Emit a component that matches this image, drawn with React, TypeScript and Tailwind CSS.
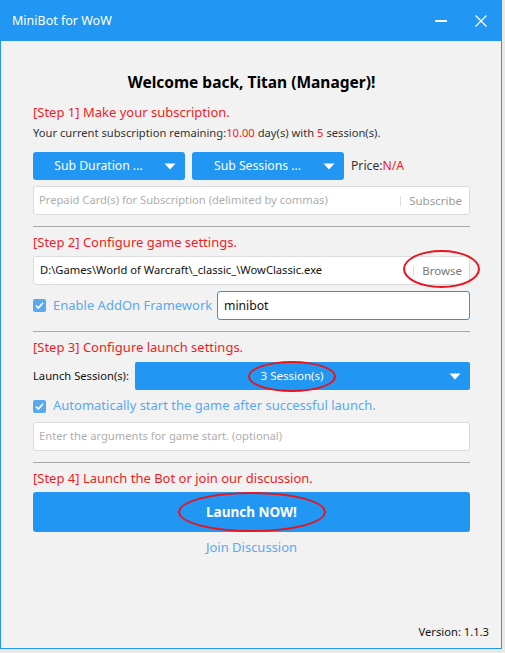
import { useState } from 'react';

function Caret() {
  return (
    <svg width="12" height="7" viewBox="0 0 12 7" className="shrink-0">
      <path d="M0.5 0.5 L11.5 0.5 L6 6.5 Z" fill="#ffffff" />
    </svg>
  );
}

function Check() {
  return (
    <div className="w-[13px] h-[13px] rounded-[2px] bg-[#5aa9ef] flex items-center justify-center shrink-0">
      <svg width="11" height="11" viewBox="0 0 11 11">
        <path d="M2 5.6 L4.4 8 L9 2.8" fill="none" stroke="#ffffff" strokeWidth="1.6" />
      </svg>
    </div>
  );
}

function Ring({ className }: { className: string }) {
  return (
    <div
      className={
        'absolute rounded-[50%] border-[2.5px] border-[#e8141e] pointer-events-none ' + className
      }
    />
  );
}

function StepTitle({ children, className = '' }: { children: string; className?: string }) {
  return (
    <div className={'h-[20px] leading-[20px] text-[13px] text-[#f01c24] whitespace-nowrap ' + className}>
      {children}
    </div>
  );
}

export default function App() {
  const [addonName, setAddonName] = useState('minibot');
  const [cards, setCards] = useState('');
  const [args, setArgs] = useState('');

  return (
    <div
      className="w-[505px] h-[653px] bg-[#e9e9e9] relative"
      style={{ fontFamily: '"Noto Sans", "Open Sans", sans-serif' }}
    >
      <div className="w-[502px] h-[649px] bg-[#f2f2f2] border border-[#2196f3] flex flex-col">
        {/* title bar */}
        <div className="h-[40px] bg-[#2196f3] flex items-center pl-[11px] pr-[14px] text-white shrink-0">
          <span className="text-[12.5px] flex-1">MiniBot for WoW</span>
          <div className="w-[12px] h-[2px] bg-white mr-[28px]" />
          <svg width="12" height="12" viewBox="0 0 12 12">
            <path d="M0.5 0.5 L11.5 11.5 M11.5 0.5 L0.5 11.5" stroke="#ffffff" strokeWidth="1.3" />
          </svg>
        </div>

        <div className="flex-1 flex flex-col pl-[32px] pr-[31px] text-[11.2px] text-[#333333]">
          <h1 className="mt-[30px] h-[22px] leading-[22px] text-center text-[15.5px] font-bold text-black">
            Welcome back, Titan (Manager)!
          </h1>

          {/* step 1 */}
          <StepTitle className="mt-[9px]">[Step 1] Make your subscription.</StepTitle>
          <div className="mt-[3px] h-[16px] leading-[16px] whitespace-nowrap">
            Your current subscription remaining:<span className="text-[#f01c24]">10.00</span> day(s) with{' '}
            <span className="text-[#f01c24]">5</span> session(s).
          </div>
          <div className="mt-[11px] flex items-center gap-[7px] h-[28px]">
            <button className="w-[152px] h-full bg-[#2196f3] rounded-[3px] flex items-center text-white text-[12.2px] pr-[9px]">
              <span className="flex-1 text-center whitespace-nowrap">Sub Duration ...</span>
              <Caret />
            </button>
            <button className="w-[152px] h-full bg-[#2196f3] rounded-[3px] flex items-center text-white text-[12.2px] pr-[9px]">
              <span className="flex-1 text-center whitespace-nowrap">Sub Sessions ...</span>
              <Caret />
            </button>
            <span className="text-[12.2px] text-[#333333] whitespace-nowrap">
              Price:<span className="text-[#f01c24]">N/A</span>
            </span>
          </div>
          <div className="mt-[6px] h-[29px] bg-white border border-[#dcdcdc] rounded-[3px] flex items-center pl-[5px] pr-[7px]">
            <input
              value={cards}
              onChange={(e) => setCards(e.target.value)}
              placeholder="Prepaid Card(s) for Subscription (delimited by commas)"
              className="flex-1 min-w-0 outline-none bg-transparent text-[11.2px] placeholder:text-[#aeaeae]"
            />
            <div className="w-px h-[10px] bg-[#dddddd] mr-[8px]" />
            <span className="text-[11.5px] text-[#9a9a9a]">Subscribe</span>
          </div>
          <div className="mt-[11px] h-px bg-[#a8a8a8]" />

          {/* step 2 */}
          <StepTitle className="mt-[5px]">[Step 2] Configure game settings.</StepTitle>
          <div className="mt-[4px] h-[29px] bg-white border border-[#dcdcdc] rounded-[3px] flex items-center pl-[6px] pr-[7px]">
            <span className="flex-1 text-[11.2px] text-[#111111] whitespace-nowrap">
              D:\Games\World of Warcraft\_classic_\WowClassic.exe
            </span>
            <div className="w-px h-[10px] bg-[#dddddd] mr-[8px]" />
            <span className="text-[11.5px] text-[#777777]">Browse</span>
          </div>
          <div className="mt-[6px] flex items-center h-[29px]">
            <Check />
            <span className="ml-[7px] text-[13px] text-[#5aa9ef] w-[164px] shrink-0 whitespace-nowrap">
              Enable AddOn Framework
            </span>
            <input
              value={addonName}
              onChange={(e) => setAddonName(e.target.value)}
              className="flex-1 min-w-0 h-full bg-white border border-[#2196f3] rounded-[3px] px-[6px] outline-none text-[12.2px] text-[#111111]"
            />
          </div>
          <div className="mt-[11px] h-px bg-[#a8a8a8]" />

          {/* step 3 */}
          <StepTitle className="mt-[5px]">[Step 3] Configure launch settings.</StepTitle>
          <div className="mt-[5px] flex items-center h-[28px]">
            <span className="w-[102px] shrink-0 whitespace-nowrap text-[11.2px] text-[#111111]">Launch Session(s):</span>
            <button className="flex-1 h-full bg-[#2196f3] rounded-[2px] flex items-center text-white text-[11.5px] pr-[9px]">
              <span className="flex-1 text-center">3 Session(s)</span>
              <Caret />
            </button>
          </div>
          <div className="mt-[7px] h-[18px] flex items-center">
            <Check />
            <span className="ml-[7px] text-[13px] text-[#5aa9ef] whitespace-nowrap">
              Automatically start the game after successful launch.
            </span>
          </div>
          <div className="mt-[7px] h-[29px] bg-white border border-[#dcdcdc] rounded-[3px] flex items-center pl-[5px] pr-[7px]">
            <input
              value={args}
              onChange={(e) => setArgs(e.target.value)}
              placeholder="Enter the arguments for game start. (optional)"
              className="flex-1 min-w-0 outline-none bg-transparent text-[11.2px] placeholder:text-[#aeaeae]"
            />
          </div>
          <div className="mt-[11px] h-px bg-[#a8a8a8]" />

          {/* step 4 */}
          <StepTitle className="mt-[5px]">[Step 4] Launch the Bot or join our discussion.</StepTitle>
          <button className="mt-[4px] h-[40px] bg-[#2196f3] rounded-[3px] text-white text-[13.5px] font-bold">
            Launch NOW!
          </button>
          <div className="mt-[6px] h-[18px] leading-[18px] text-center text-[13px] text-[#5aa9ef]">Join Discussion</div>

          <div className="flex-1" />
          <div className="mb-[8px] -mr-[19px] h-[16px] leading-[16px] text-right text-[11.2px] text-[#111111]">
            Version: 1.1.3
          </div>
        </div>
      </div>

      {/* annotation rings */}
      <Ring className="left-[403px] top-[250px] w-[77px] h-[38px]" />
      <Ring className="left-[248px] top-[361px] w-[88px] h-[31px]" />
      <Ring className="left-[178px] top-[492px] w-[148px] h-[40px]" />
    </div>
  );
}
